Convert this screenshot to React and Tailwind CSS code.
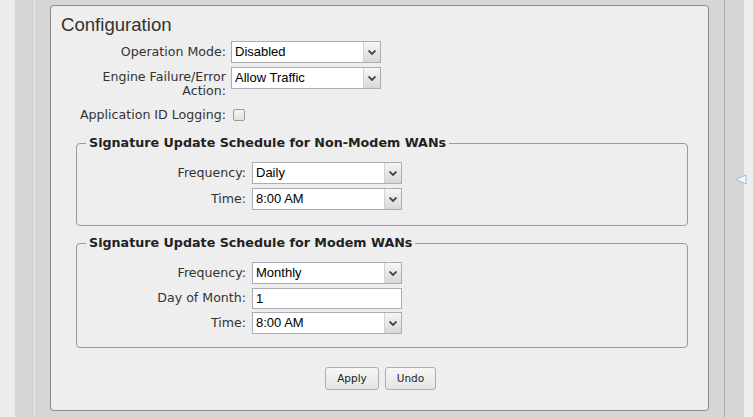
import React from "react";

const label = "font-['DejaVu_Sans',sans-serif] text-[12.6px] text-[#333]";
const value = "font-['Liberation_Sans',Arial,sans-serif] text-[13px] text-black";

function Select({ text, width = "w-[150px]" }) {
  return (
    <div className={`flex h-[22px] ${width} border border-[#abadb3] bg-white`}>
      <div className={`flex flex-1 items-center pl-[3px] ${value}`}>{text}</div>
      <div className="flex w-[17px] items-center justify-center border-l border-[#d0d0d8] bg-gradient-to-b from-[#f6f6f6] to-[#d8d8d8]">
        <svg width="8" height="5" viewBox="0 0 8 5">
          <path d="M0.5 0.5 L4 4 L7.5 0.5" fill="none" stroke="#444" strokeWidth="1.8" />
        </svg>
      </div>
    </div>
  );
}

function Row({ name, children, labelW = "w-[150px]", gap = "gap-[5px]", className = "" }) {
  return (
    <div className={`flex items-center ${gap} ${className}`}>
      <div className={`${labelW} whitespace-nowrap text-right ${label}`}>{name}</div>
      {children}
    </div>
  );
}

function Group({ title, children, className = "" }) {
  return (
    <fieldset className={`ml-[15px] w-[612px] rounded-[4px] border border-[#9a9a9a] px-[9px] ${className}`}>
      <legend className="px-[3px] font-['DejaVu_Sans',sans-serif] text-[12.7px] font-bold leading-[14px] text-[#222]">
        {title}
      </legend>
      <div className="mt-[12px] flex flex-col">{children}</div>
    </fieldset>
  );
}

function Button({ children, w }) {
  return (
    <button className={`h-[23px] ${w} rounded-[3px] border border-[#adadad] bg-gradient-to-b from-[#f7f7f7] to-[#e4e4e4] font-['DejaVu_Sans',sans-serif] text-[10.5px] text-[#222]`}>
      {children}
    </button>
  );
}

export default function App() {
  return (
    <div className="flex h-[417px] w-[753px] overflow-hidden bg-[#d6d6d6]">
      <div className="w-[15px] bg-[#ececec]" />
      <div className="w-[19px]" />
      <div className="w-px bg-[#ebebeb]" />
      <div className="w-[15px]" />

      <div className="mt-[5px] flex h-[406px] w-[659px] flex-col rounded-[4px] border border-[#8a8a8a] bg-[#eeeeee] pl-[10px]">
        <h2 className="mt-[9px] font-['Liberation_Sans',Arial,sans-serif] text-[18.6px] leading-[20px] text-[#333]">
          Configuration
        </h2>

        <div className="flex flex-col pl-[15px]">
          <Row name="Operation Mode:" className="mt-[6px] h-[22px]">
            <Select text="Disabled" />
          </Row>
          <div className="mt-[4px] flex items-start gap-[5px]">
            <div className={`w-[150px] pt-[3px] text-right leading-[14px] ${label}`}>
              Engine Failure/Error Action:
            </div>
            <Select text="Allow Traffic" />
          </div>
          <Row name="Application ID Logging:" className="mt-[6px] h-[22px]">
            <div className="ml-[2px] h-[12px] w-[12px] rounded-[2px] border border-[#9a9a9a] bg-gradient-to-b from-[#f4f4f4] to-[#e2e2e2]" />
          </Row>
        </div>

        <Group title="Signature Update Schedule for Non-Modem WANs" className="mt-[10px] pb-[15px]">
          <Row name="Frequency:" labelW="w-[160px]" gap="gap-[6px]">
            <Select text="Daily" />
          </Row>
          <Row name="Time:" labelW="w-[160px]" gap="gap-[6px]" className="mt-[4px]">
            <Select text="8:00 AM" />
          </Row>
        </Group>

        <Group title="Signature Update Schedule for Modem WANs" className="mt-[10px] pb-[13px]">
          <Row name="Frequency:" labelW="w-[160px]" gap="gap-[6px]">
            <Select text="Monthly" />
          </Row>
          <Row name="Day of Month:" labelW="w-[160px]" gap="gap-[6px]" className="mt-[4px]">
            <div className={`flex h-[21px] w-[150px] items-center border border-[#abadb3] bg-white pl-[3px] ${value}`}>1</div>
          </Row>
          <Row name="Time:" labelW="w-[160px]" gap="gap-[6px]" className="mt-[3px]">
            <Select text="8:00 AM" />
          </Row>
        </Group>

        <div className="mt-[19px] flex justify-center gap-[6px] pr-[8px]">
          <Button w="w-[54px]">Apply</Button>
          <Button w="w-[51px]">Undo</Button>
        </div>
      </div>

      <div className="w-[15px]" />
      <div className="w-px bg-[#a9a9a9]" />
      <div className="relative w-[19px]">
        <svg className="absolute left-[10px] top-[174px]" width="12" height="12" viewBox="0 0 12 12">
          <path d="M11 1 L1 5.5 L11 10 Z" fill="#f4f8ff" stroke="#9fb8e0" strokeWidth="1" />
        </svg>
      </div>
      <div className="w-[9px] bg-[#eeeeee]" />
    </div>
  );
}
